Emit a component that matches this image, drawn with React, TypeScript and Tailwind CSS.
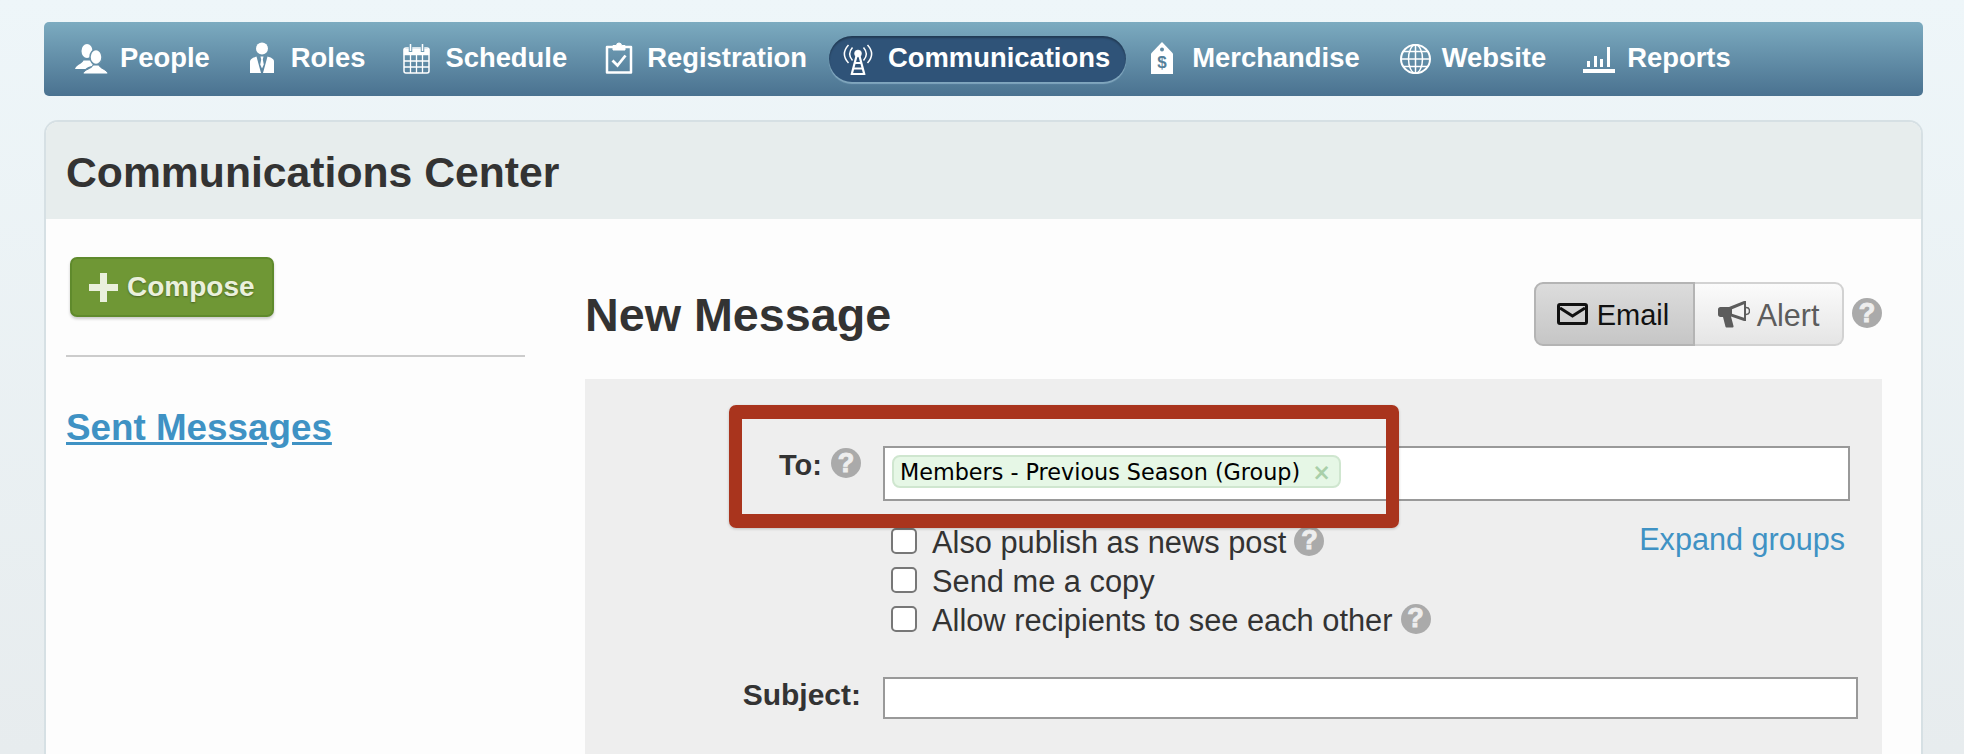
import type { ReactNode } from "react";

function PeopleIcon() {
    return (
        <svg width="33" height="30" viewBox="0 0 33 30" fill="#fff">
            <ellipse cx="12" cy="7" rx="5.5" ry="7" />
            <path d="M0 25c1-4 7-5 8.500-8.500h7c1 3 2 4 3 5-4 1-7 2-8 3.500z" />
            <ellipse cx="21" cy="13" rx="6" ry="7.500" stroke="#6a93ab" strokeWidth="1.500" />
            <path d="M8 30c1-5 9-5 10-9h6c1 4 8 4 9 9z" stroke="#5d88a2" strokeWidth="1" />
        </svg>
    );
}

function RolesIcon() {
    return (
        <svg width="24" height="31" viewBox="0 0 24 31" fill="#fff" className="-mt-[3px]">
            <circle cx="12" cy="6.500" r="6" />
            <path d="M0 31V19.500c0-2.500 3-4 6.500-5L11 31z" />
            <path d="M24 31V19.500c0-2.500-3-4-6.500-5L13 31z" />
            <path d="M10.500 14.500h3l-.7 3 1 5-1.800 4-1.800-4 1-5z" />
        </svg>
    );
}

function ScheduleIcon() {
    return (
        <svg width="27" height="30" viewBox="0 0 27 30" fill="none" stroke="#fff">
            <rect x="1" y="4" width="25" height="25" rx="2" strokeWidth="1.500" />
            <path d="M1 5h25v6H1z" fill="#fff" strokeWidth="0.500" />
            <path d="M7.500 1v7M19.500 1v7" stroke="#6f9bb3" strokeWidth="3.500" />
            <path d="M7.500 0v7M19.500 0v7" strokeWidth="1.500" />
            <path d="M1 17h25M1 23h25M7.500 11v18M13.500 11v18M19.500 11v18" strokeWidth="1.300" />
        </svg>
    );
}

function RegistrationIcon() {
    return (
        <svg width="28" height="32" viewBox="0 0 28 32" fill="none" stroke="#fff" className="-mt-[2px]">
            <path d="M8 5H2v25.500h24V5h-6" strokeWidth="2.500" strokeLinejoin="round" />
            <path d="M8 8V3.500h3.500a2.500 2.500 0 0 1 5 0H20V8z" fill="#fff" strokeWidth="1" />
            <path d="M7.500 18.500l5 5 8-10" strokeWidth="2.800" />
        </svg>
    );
}

function TowerIcon() {
    return (
        <svg width="32" height="31" viewBox="0 0 32 31" fill="none" stroke="#fff">
            <path d="M6.500 1C1 7 1 13 6.500 19M25.500 1c5.500 6 5.500 12 0 18" strokeWidth="1.500" />
            <path d="M10.500 3.500c-3.500 4-3.500 9 0 13M21.500 3.500c3.500 4 3.500 9 0 13" strokeWidth="1.500" />
            <circle cx="16" cy="9.500" r="3.500" fill="#fff" strokeWidth="0.500" />
            <path d="M14.500 12L9.500 31M17.500 12l5 19" strokeWidth="2.200" />
            <path d="M13 19h6M11.500 24.500h9M10 30h12" strokeWidth="2" />
        </svg>
    );
}

function TagIcon() {
    return (
        <svg width="24" height="32" viewBox="0 0 24 32" className="-mt-[2px] ml-[2px]">
            <path d="M12 0l11 11.500V32H1V11.500z" fill="#fff" />
            <circle cx="12" cy="7.500" r="2" fill="#5f8aa3" />
            <text x="12" y="26" textAnchor="middle" fontSize="17" fontWeight="700" fontFamily="Liberation Sans, sans-serif" fill="#557f9a">$</text>
        </svg>
    );
}

function GlobeIcon() {
    return (
        <svg width="31" height="30" viewBox="0 0 31 30" fill="none" stroke="#fff" strokeWidth="1.500">
            <ellipse cx="15.500" cy="15" rx="14.500" ry="14.200" strokeWidth="2" />
            <ellipse cx="15.500" cy="15" rx="7" ry="14.200" />
            <path d="M15.500 1v28M1 15h29M3.500 7.500h24M3.500 22.500h24" />
        </svg>
    );
}

function ReportsIcon() {
    return (
        <svg width="32" height="27" viewBox="0 0 32 27" fill="#fff">
            <path d="M0 23h32v4H0zM4 15h3v6H4zM11 10h3v11h-3zM17 13h3v8h-3zM24 1h3v20h-3z" />
        </svg>
    );
}

function MailIcon() {
    return (
        <svg width="31" height="22" viewBox="0 0 31 22" fill="none" stroke="#111" strokeWidth="3">
            <rect x="1.500" y="1.500" width="28" height="19" rx="1.500" />
            <path d="M3 5l12.500 8L28 5" />
        </svg>
    );
}

function MegaphoneIcon() {
    return (
        <svg width="32" height="27" viewBox="0 0 32 27" fill="#5c5c5c">
            <path d="M0 8.500C0 7 1 6 2.500 6H11l15-6h2v20h-2L13 15.500l2.500 9.500c.3 1-.5 1.500-1.500 1.500H9c-1 0-1.500-.5-1.700-1.500L5 16H2.500C1 16 0 15 0 13.500z" />
            <path d="M14 8.200l12-5v13.600l-12-4z" fill="#f3f3f3" />
            <path d="M28 6.500c2.500 0 3.500 1.800 3.500 3.500s-1 3.500-3.500 3.500" fill="none" stroke="#5c5c5c" strokeWidth="1.500" />
        </svg>
    );
}

function Help() {
    return (
        <span className="flex h-[30px] w-[30px] shrink-0 items-center justify-center rounded-full bg-[#aaaaaa] text-[27px] leading-none font-bold text-[#eeeeee] [-webkit-text-stroke:1px_#eeeeee]">
            ?
        </span>
    );
}

function NavItem({ icon, width, label, active, className }: { icon: ReactNode; width: string; label: string; active?: boolean; className?: string }) {
    return (
        <a
            className={
                (active
                    ? "flex h-[46px] items-center rounded-[23px] bg-[#2f5378] pr-4 pl-[13px] shadow-[inset_0_2px_2px_rgba(0,0,0,0.3),0_2px_1px_rgba(160,195,215,0.6)] "
                    : "flex h-[46px] items-center px-4 ") + (className ?? "")
            }
        >
            <span className={width}>{icon}</span>
            <span className="ml-3 pb-[2px] text-[27.400px] leading-none font-bold text-white">{label}</span>
        </a>
    );
}

function CheckRow({ label, help }: { label: string; help?: boolean }) {
    return (
        <label className="flex h-[39px] items-center pl-2">
            <input type="checkbox" className="h-[26px] w-[26px] appearance-none rounded-[5px] border-2 border-[#777777] bg-white" />
            <span className="ml-[15px] pt-[5px] text-[30.800px] leading-none text-[#333333]">{label}</span>
            {help && <span className="ml-2"><Help /></span>}
        </label>
    );
}

export default function App() {
    return (
        <div className="h-[754px] overflow-hidden bg-gradient-to-b from-[#eef6f9] to-[#e7ecee] pt-[22px] pr-[41px] pl-[44px] font-['Liberation_Sans',sans-serif] text-[#333333]">
            <nav className="flex h-[74px] items-center gap-[6px] rounded-[5px] bg-gradient-to-b from-[#7cabc0] to-[#4a7290] pl-[15px]">
                <NavItem icon={<PeopleIcon />} width="w-[33px]" label="People" />
                <NavItem icon={<RolesIcon />} width="w-[29px]" label="Roles" className="ml-[2px]" />
                <NavItem icon={<ScheduleIcon />} width="w-[30px]" label="Schedule" />
                <NavItem icon={<RegistrationIcon />} width="w-[30px]" label="Registration" />
                <NavItem icon={<TowerIcon />} width="w-[34px]" label="Communications" active />
                <NavItem icon={<TagIcon />} width="w-[32px]" label="Merchandise" />
                <NavItem icon={<GlobeIcon />} width="w-[30px]" label="Website" className="ml-[2px]" />
                <NavItem icon={<ReportsIcon />} width="w-[32px]" label="Reports" className="-ml-[1px]" />
            </nav>

            <section className="mt-[24px] h-[700px] overflow-hidden rounded-t-[14px] border-2 border-b-0 border-[#d6e0e4] bg-[#fdfdfd]">
                <header className="flex h-[97px] items-center bg-[#e7eded] pt-[4px] pl-[20px]">
                    <h1 className="text-[42.700px] leading-none font-bold">Communications Center</h1>
                </header>

                <div className="flex">
                    <aside className="w-[539px] pt-[38px] pl-[20px]">
                        <button className="ml-[4px] flex h-[60px] w-[204px] items-center rounded-[7px] border-2 border-[#5f8a2c] bg-[#6f9735] pl-[17px] shadow-[0_2px_3px_rgba(0,0,0,0.2)]">
                            <svg width="29" height="29" viewBox="0 0 29 29" fill="#eaf0dc">
                                <path d="M11 0h7v11h11v7H18v11h-7V18H0v-7h11z" />
                            </svg>
                            <span className="ml-[9px] text-[28px] leading-none font-bold text-[#eaf0dc] [text-shadow:0_1px_2px_rgba(0,0,0,0.35)]">Compose</span>
                        </button>
                        <div className="mt-[38px] h-[2px] w-[459px] bg-[#cccccc]" />
                        <a className="mt-[53px] block text-[36.800px] leading-none font-bold text-[#3f92c4] underline">Sent Messages</a>
                    </aside>

                    <main className="w-[1297px] pt-[64px]">
                        <div className="flex h-[64px] items-center justify-between">
                            <h2 className="text-[46.700px] leading-none font-bold">New Message</h2>
                            <div className="flex items-center gap-2 pb-[2px]">
                                <div className="flex h-[64px]">
                                    <button className="flex w-[161px] items-center justify-center gap-[9px] rounded-l-[9px] border-2 border-[#b4b4b4] bg-gradient-to-b from-[#dcdcdc] to-[#c6c6c6] pr-[3px] text-[29px] text-[#111111]">
                                        <MailIcon />
                                        <span className="pt-[3px] leading-none">Email</span>
                                    </button>
                                    <button className="flex w-[149px] items-center justify-center gap-[7px] rounded-r-[9px] border-2 border-l-0 border-[#d2d2d2] bg-gradient-to-b from-[#fbfbfb] to-[#e5e5e5] text-[30.500px] text-[#5c5c5c]">
                                        <MegaphoneIcon />
                                        <span className="pt-[3px] leading-none">Alert</span>
                                    </button>
                                </div>
                                <span className="-mt-[2px]"><Help /></span>
                            </div>
                        </div>

                        <div className="relative mt-[32px] h-[400px] bg-[#eeeeee] pt-[67px]">
                            <div className="flex">
                                <div className="flex h-[34px] w-[276px] shrink-0 items-center justify-end gap-[9px]">
                                    <span className="pt-[5px] text-[29px] leading-none font-bold">To:</span>
                                    <Help />
                                </div>
                                <div className="ml-[22px] w-[967px]">
                                    <div className="flex h-[55px] items-start border-2 border-[#999999] bg-white pt-[7px] pl-[7px]">
                                        <span className="flex h-[33px] items-center rounded-[8px] border-2 border-[#cfe6cf] bg-[#e6f7e6] pt-[2px] pr-[8px] pl-[6px] font-['DejaVu_Sans',sans-serif] text-[22.300px] leading-none text-black">
                                            Members - Previous Season (Group)
                                            <span className="ml-[12px] font-bold text-[#a9cfa9]">×</span>
                                        </span>
                                    </div>
                                    <div className="relative mt-[20px]">
                                        <CheckRow label="Also publish as news post" help />
                                        <CheckRow label="Send me a copy" />
                                        <CheckRow label="Allow recipients to see each other" help />
                                        <a className="absolute -top-[1px] right-[5px] text-[30.600px] leading-[39px] text-[#3f92c4]">Expand groups</a>
                                    </div>
                                </div>
                            </div>
                            <div className="mt-[39px] flex items-start">
                                <label className="w-[276px] shrink-0 pt-[3px] text-right text-[30px] leading-none font-bold">Subject:</label>
                                <input className="ml-[22px] h-[42px] w-[975px] border-2 border-[#999999] bg-white" />
                            </div>

                            <div className="absolute top-[26px] left-[144px] h-[123px] w-[670px] rounded-[7px] border-x-[13px] border-y-[14px] border-[#a9341d] shadow-[0_1px_3px_rgba(0,0,0,0.2)]" />
                        </div>
                    </main>
                </div>
            </section>
        </div>
    );
}
